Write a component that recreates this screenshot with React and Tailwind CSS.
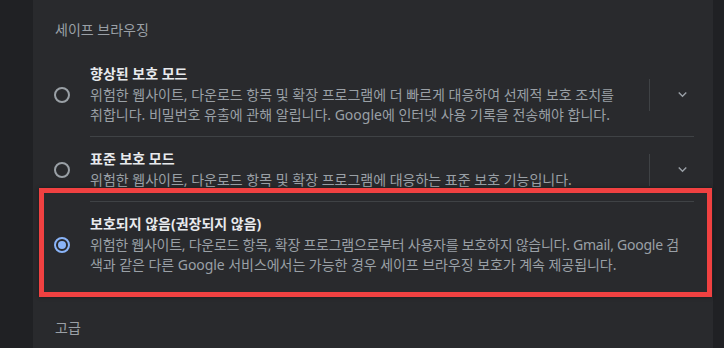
import React from "react";

const FONT = { fontFamily: '"Noto Sans", "Noto Sans CJK KR", sans-serif' };

function Radio({ checked }) {
  if (checked) {
    return (
      <div className="w-[16px] h-[16px] rounded-full border-2 border-[#8ab4f8] flex items-center justify-center shrink-0">
        <div className="w-[8px] h-[8px] rounded-full bg-[#8ab4f8]" />
      </div>
    );
  }
  return <div className="w-[16px] h-[16px] rounded-full border-2 border-[#9aa0a6] shrink-0" />;
}

function Chevron() {
  return (
    <svg width="17" height="17" viewBox="0 0 24 24" className="block">
      <path d="M7.41 8.59 12 13.17l4.59-4.58L18 10l-6 6-6-6z" fill="#9aa0a6" />
    </svg>
  );
}

function Row({ checked, title, lines, expandable, pt, divider }) {
  return (
    <div>
      <div className={`flex items-center ${pt} pb-[11px]`}>
        <div className="pl-[21px] pr-[20px] flex items-center">
          <Radio checked={checked} />
        </div>
        <div className="flex-1">
          <div className="text-[14px] leading-[20px] font-bold text-[#e8eaed] mb-[1px]">{title}</div>
          <div className="text-[14px] leading-[20px] text-[#9aa0a6] whitespace-nowrap">{lines}</div>
        </div>
        {expandable && (
          <div className="flex items-center">
            <div className="w-px h-[32px] bg-[#3f4245]" />
            <div className="ml-[29px] mr-[24px] flex items-center justify-center w-[10px]">
              <div className="-ml-[3px]">
                <Chevron />
              </div>
            </div>
          </div>
        )}
        {!expandable && <div className="w-[24px]" />}
      </div>
      {divider && <div className="ml-[57px] mr-[19px] h-px bg-[#3f4245]" />}
    </div>
  );
}

export default function App() {
  return (
    <div className="relative w-[724px] h-[348px] bg-[#202124] flex overflow-hidden" style={FONT}>
      <div className="w-[33px] shrink-0" />
      <div className="w-[680px] shrink-0 bg-[#292a2d] flex flex-col">
        <div className="pt-[20px] pl-[22px] text-[14px] leading-[20px] text-[#9aa0a6]">세이프 브라우징</div>
        <Row
          pt="pt-[24px]"
          title="향상된 보호 모드"
          lines={
            <>
              <div>위험한 웹사이트, 다운로드 항목 및 확장 프로그램에 더 빠르게 대응하여 선제적 보호 조치를</div>
              <div>취합니다. 비밀번호 유출에 관해 알립니다. Google에 인터넷 사용 기록을 전송해야 합니다.</div>
            </>
          }
          expandable
          divider
        />
        <Row
          pt="pt-[12px]"
          title="표준 보호 모드"
          lines={<div>위험한 웹사이트, 다운로드 항목 및 확장 프로그램에 대응하는 표준 보호 기능입니다.</div>}
          expandable
          divider
        />
        <Row
          pt="pt-[12px]"
          checked
          title="보호되지 않음(권장되지 않음)"
          lines={
            <>
              <div className="tracking-[-0.25px]">
                위험한 웹사이트, 다운로드 항목, 확장 프로그램으로부터 사용자를 보호하지 않습니다. Gmail, Google 검
              </div>
              <div className="tracking-[-0.05px]">
                색과 같은 다른 Google 서비스에서는 가능한 경우 세이프 브라우징 보호가 계속 제공됩니다.
              </div>
            </>
          }
        />
        <div className="pt-[32px] pl-[22px] text-[14px] leading-[20px] text-[#9aa0a6]">고급</div>
      </div>
      <div className="flex-1" />
      <div className="absolute left-[39px] top-[188px] w-[673px] h-[109px] border-[5px] border-[#f04141] shadow-[0_0_4px_rgba(0,0,0,0.4)]" />
    </div>
  );
}
